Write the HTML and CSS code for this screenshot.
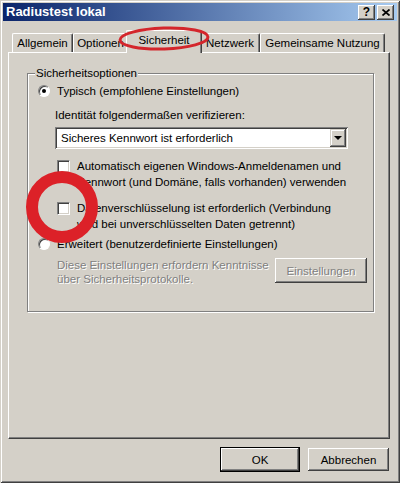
FILE: index.html
```html
<!DOCTYPE html>
<html lang="de">
<head>
<meta charset="utf-8">
<title>Radiustest lokal</title>
<link rel="stylesheet" href="styles.css">
</head>
<body>
<div class="window">
  <div class="titlebar">
    <span class="title">Radiustest lokal</span>
    <div class="tbtns">
      <span class="tbtn">?</span>
      <span class="tbtn"><svg width="8" height="7" viewBox="0 0 8 7"><path d="M0.5 0.5 L7.5 6.5 M7.5 0.5 L0.5 6.5" stroke="#000" stroke-width="1.7"/></svg></span>
    </div>
  </div>
  <div class="content">
    <div class="tabs">
      <div class="tab t-allg">Allgemein</div>
      <div class="tab t-opt">Optionen</div>
      <div class="tab t-sich active">Sicherheit</div>
      <div class="tab t-netz">Netzwerk</div>
      <div class="tab t-gem">Gemeinsame Nutzung</div>
    </div>
    <div class="page">
      <div class="group">
        <span class="legend">Sicherheitsoptionen</span>
        <div class="opt-row">
          <span class="radio checked"></span>
          <span>Typisch (empfohlene Einstellungen)</span>
        </div>
        <div class="sub label">Identität folgendermaßen verifizieren:</div>
        <div class="sub combo">
          <span class="combo-text">Sicheres Kennwort ist erforderlich</span>
          <span class="combo-btn"><span class="arrow"></span></span>
        </div>
        <div class="sub check-row c1">
          <span class="checkbox"></span>
          <span class="check-text">Automatisch eigenen Windows-Anmeldenamen und<br>Kennwort (und Domäne, falls vorhanden) verwenden</span>
        </div>
        <div class="sub check-row c2">
          <span class="checkbox"></span>
          <span class="check-text">Datenverschlüsselung ist erforderlich (Verbindung<br>wird bei unverschlüsselten Daten getrennt)</span>
        </div>
        <div class="opt-row r2">
          <span class="radio"></span>
          <span>Erweitert (benutzerdefinierte Einstellungen)</span>
        </div>
        <div class="adv-row">
          <span class="disabled-text">Diese Einstellungen erfordern Kenntnisse<br>über Sicherheitsprotokolle.</span>
          <span class="btn btn-adv">Einstellungen</span>
        </div>
      </div>
    </div>
    <div class="buttons">
      <span class="btn btn-ok">OK</span>
      <span class="btn btn-cancel">Abbrechen</span>
    </div>
  </div>
  <svg class="annot" width="400" height="483" viewBox="0 0 400 483">
    <ellipse cx="164" cy="38.5" rx="44" ry="10.5" fill="none" stroke="#d4262c" stroke-width="3" transform="rotate(-2 164 38.5)"/>
    <circle cx="62" cy="207" r="30" fill="none" stroke="#dc2128" stroke-width="12"/>
  </svg>
</div>
</body>
</html>
```
FILE: styles.css
```css
* { box-sizing: border-box; }
html, body { margin: 0; padding: 0; }
body {
  width: 400px;
  height: 483px;
  overflow: hidden;
  background: #d4d0c8;
  font-family: "Liberation Sans", Arial, sans-serif;
  font-size: 11.5px;
  color: #000;
}
.window {
  position: relative;
  width: 400px;
  height: 483px;
  padding: 3px;
  background: #d4d0c8;
  box-shadow: inset 1px 1px 0 #d4d0c8, inset -1px -1px 0 #404040, inset 2px 2px 0 #fff, inset -2px -2px 0 #808080;
}
.titlebar {
  height: 18px;
  display: flex;
  align-items: center;
  justify-content: space-between;
  padding: 0 3px 0 3px;
  background: linear-gradient(to right, #0a246a, #a6caf0);
}
.title {
  color: #fff;
  font-weight: bold;
  font-size: 13px;
  line-height: 18px;
}
.tbtns { display: flex; gap: 2px; }
.tbtn {
  width: 17px;
  height: 15px;
  display: flex;
  align-items: center;
  justify-content: center;
  background: #d4d0c8;
  box-shadow: inset -1px -1px 0 #404040, inset 1px 1px 0 #fff, inset -2px -2px 0 #808080;
  font-weight: bold;
  font-size: 12px;
  line-height: 15px;
}
.content { padding: 9px 7px 0 5px; }
.tabs {
  display: flex;
  align-items: flex-end;
  height: 22px;
  margin-left: 4px;
}
.tab {
  height: 19px;
  text-align: center;
  line-height: 19px;
  white-space: nowrap;
  border-left: 1px solid #fff;
  border-top: 1px solid #fff;
  border-right: 1px solid #404040;
  box-shadow: inset -1px 0 0 #808080;
  border-radius: 2px 2px 0 0;
  background: #d4d0c8;
}
.t-allg { width: 61px; }
.t-opt { width: 55px; }
.t-sich { width: 72px; }
.t-netz { width: 60px; }
.t-gem { width: 125px; }
.tab.active {
  width: 76px;
  height: 23px;
  margin: 0 -2px -1px;
  line-height: 19px;
  position: relative;
  z-index: 1;
}
.page {
  height: 387px;
  border: 1px solid;
  border-color: #fff #404040 #404040 #fff;
  box-shadow: inset -1px -1px 0 #808080;
  padding: 20px 0 0 18px;
}
.group {
  position: relative;
  width: 347px;
  height: 239px;
  border: 1px solid #808080;
  box-shadow: 1px 1px 0 #fff, inset 1px 1px 0 #fff;
  padding: 9px 6px 0 10px;
}
.legend {
  position: absolute;
  top: -8px;
  left: 7px;
  padding: 0 1px;
  line-height: 14px;
  background: #d4d0c8;
}
.opt-row {
  display: flex;
  align-items: center;
  height: 16px;
  line-height: 16px;
}
.opt-row.r2 { margin-top: 4px; }
.radio {
  width: 12px;
  height: 12px;
  margin-right: 7px;
  border-radius: 50%;
  background: #fff;
  border: 1px solid;
  border-color: #808080 #fff #fff #808080;
  box-shadow: inset 1px 1px 0 #404040;
  display: flex;
  align-items: center;
  justify-content: center;
  flex: none;
}
.radio.checked::after {
  content: "";
  width: 4px;
  height: 4px;
  border-radius: 50%;
  background: #000;
}
.sub { margin-left: 17px; }
.label { margin-top: 8px; height: 16px; line-height: 16px; }
.combo {
  margin-top: 4px;
  width: 293px;
  height: 22px;
  display: flex;
  padding: 2px;
  background: #fff;
  box-shadow: inset 1px 1px 0 #808080, inset -1px -1px 0 #fff, inset 2px 2px 0 #404040, inset -2px -2px 0 #d4d0c8;
}
.combo-text { flex: 1; padding-left: 4px; line-height: 18px; }
.combo-btn {
  width: 16px;
  height: 18px;
  background: #d4d0c8;
  box-shadow: inset -1px -1px 0 #404040, inset 1px 1px 0 #d4d0c8, inset -2px -2px 0 #808080, inset 2px 2px 0 #fff;
  display: flex;
  align-items: center;
  justify-content: center;
}
.arrow {
  width: 0;
  height: 0;
  border-left: 4px solid transparent;
  border-right: 4px solid transparent;
  border-top: 4px solid #000;
}
.check-row {
  display: flex;
  align-items: flex-start;
  padding-left: 2px;
}
.check-row.c1 { margin-top: 9px; }
.check-row.c2 { margin-top: 10px; }
.checkbox {
  width: 13px;
  height: 13px;
  margin-top: 2px;
  margin-right: 7px;
  flex: none;
  background: #fff;
  border: 1px solid;
  border-color: #808080 #fff #fff #808080;
  box-shadow: inset 1px 1px 0 #404040, inset -1px -1px 0 #d4d0c8;
}
.check-text { line-height: 16px; white-space: nowrap; }
.adv-row {
  display: flex;
  align-items: flex-start;
  margin-top: 6px;
  padding-left: 19px;
}
.disabled-text {
  color: #808080;
  text-shadow: 1px 1px 0 #fff;
  line-height: 14px;
  white-space: nowrap;
}
.btn {
  display: flex;
  align-items: center;
  justify-content: center;
  background: #d4d0c8;
  box-shadow: inset -1px -1px 0 #404040, inset 1px 1px 0 #fff, inset -2px -2px 0 #808080;
  white-space: nowrap;
}
.btn-adv {
  margin-left: auto;
  width: 92px;
  height: 25px;
  color: #808080;
  text-shadow: 1px 1px 0 #fff;
}
.buttons {
  display: flex;
  justify-content: flex-end;
  align-items: center;
  gap: 8px;
  margin-top: 8px;
  padding-right: 1px;
  height: 25px;
}
.btn-ok {
  width: 80px;
  height: 25px;
  border: 1px solid #000;
}
.btn-cancel { width: 81px; height: 23px; }
.annot {
  position: absolute;
  left: 0;
  top: 0;
  pointer-events: none;
  z-index: 10;
}
```
